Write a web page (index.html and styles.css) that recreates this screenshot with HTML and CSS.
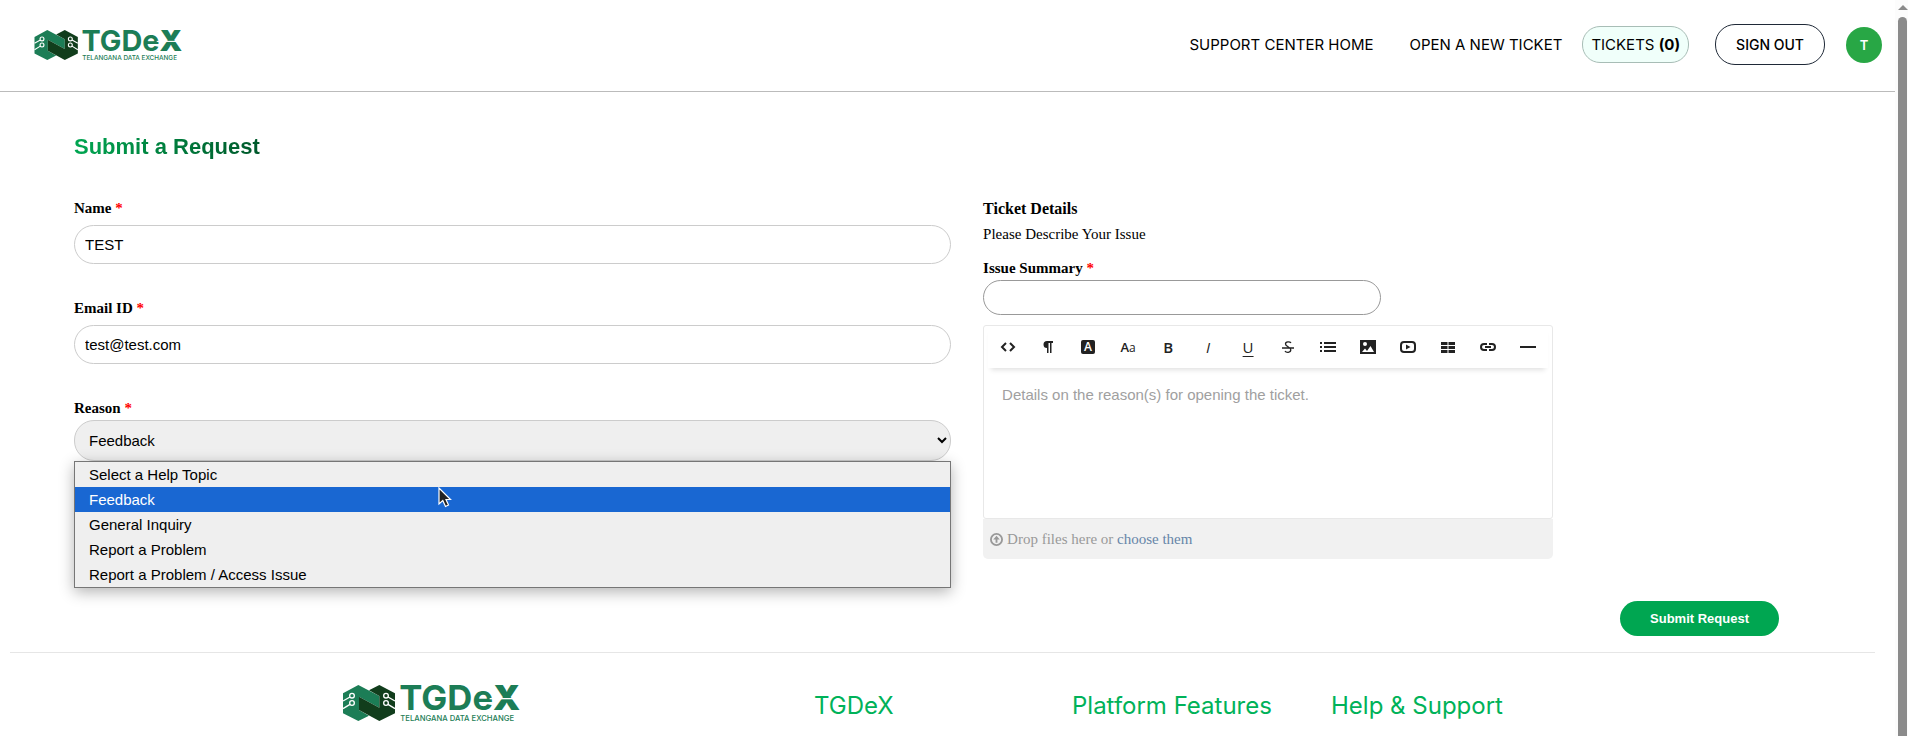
FILE: index.html
```html
<!DOCTYPE html>
<html lang="en">
<head>
    <meta charset="UTF-8">
    <meta name="viewport" content="width=device-width, initial-scale=1.0">
    <title>Submit a Request</title>
    <link rel="stylesheet" href="styles.css">
</head>
<body>
    <!-- Shared logo, used in the header and the footer -->
    <svg class="sprite" aria-hidden="true">
        <symbol id="logo" viewBox="0 0 522 108" overflow="visible">
            <polygon fill="#1c7d56" points="0,25 46,0 109,33 109,68 48,35 48,75 78,92 46,108 0,85"/>
            <polygon fill="#113d1c" points="78,16 109,0 156,25 156,85 109,108 48,75 48,35 109,68 109,33"/>
            <g fill="none" stroke="#fff" stroke-width="4">
                <circle cx="27" cy="32" r="7"/>
                <circle cx="27" cy="54" r="7"/>
                <path d="M21 36L0 48M21 58L0 71"/>
                <circle cx="129" cy="32" r="7"/>
                <circle cx="129" cy="54" r="7"/>
                <path d="M135 36L156 48M135 58L156 71"/>
            </g>
            <text class="logo-name" x="169" y="76">TGDe<tspan class="logo-x">X</tspan></text>
            <path d="M440 41H522" stroke="#fff" stroke-width="4"/>
            <text class="logo-tagline" x="172" y="107">TELANGANA DATA EXCHANGE</text>
        </symbol>
    </svg>

    <header class="header">
        <a href="#" aria-label="TGDeX"><svg class="logo"><use href="#logo"/></svg></a>
        <nav class="nav">
            <a class="nav-link" href="#">SUPPORT CENTER HOME</a>
            <a class="nav-link" href="#">OPEN A NEW TICKET</a>
            <a class="tickets" href="#">TICKETS <b>(0)</b></a>
            <a class="sign-out" href="#">SIGN OUT</a>
            <span class="avatar">T</span>
        </nav>
    </header>

    <main class="main">
        <h1 class="title">Submit a Request</h1>
        <form>
            <div class="columns">
                <div class="column">
                    <div class="field">
                        <label for="name">Name <span class="required">*</span></label>
                        <input class="text-input" type="text" id="name" value="TEST">
                    </div>
                    <div class="field">
                        <label for="email">Email ID <span class="required">*</span></label>
                        <input class="text-input" type="email" id="email" value="test@test.com">
                    </div>
                    <div class="field field-select">
                        <label for="reason">Reason <span class="required">*</span></label>
                        <select class="select" id="reason">
                            <option>Select a Help Topic</option>
                            <option selected>Feedback</option>
                            <option>General Inquiry</option>
                            <option>Report a Problem</option>
                            <option>Report a Problem / Access Issue</option>
                        </select>
                        <ul class="options">
                            <li>Select a Help Topic</li>
                            <li class="active">Feedback</li>
                            <li>General Inquiry</li>
                            <li>Report a Problem</li>
                            <li>Report a Problem / Access Issue</li>
                        </ul>
                        <svg class="cursor" viewBox="0 0 14 22" aria-hidden="true">
                            <path d="M1 1V17L4.800 13.500L7.500 19.500L10.500 18L8 12.500H12.500Z" fill="#222" stroke="#fff" stroke-width="1.200"/>
                        </svg>
                    </div>
                </div>

                <div class="column">
                    <h2 class="section-title">Ticket Details</h2>
                    <p class="section-text">Please Describe Your Issue</p>
                    <label class="summary-label" for="summary">Issue Summary <span class="required">*</span></label>
                    <input class="summary-input" type="text" id="summary">

                    <div class="editor">
                        <div class="toolbar">
                            <button type="button" aria-label="HTML"><svg viewBox="0 0 16 16"><path d="M6 4L2 8L6 12M10 4L14 8L10 12" fill="none" stroke="currentColor" stroke-width="2"/></svg></button>
                            <button type="button" aria-label="Format"><svg viewBox="0 0 16 16"><path d="M13 2V4H11.500V14H10V4H8.500V14H7V9A3.500 3.500 0 0 1 7 2Z" fill="currentColor"/></svg></button>
                            <button type="button" aria-label="Text color"><span class="glyph-box">A</span></button>
                            <button type="button" aria-label="Font family"><span class="glyph-font">A<small>a</small></span></button>
                            <button type="button" aria-label="Bold"><b>B</b></button>
                            <button type="button" aria-label="Italic"><i>I</i></button>
                            <button type="button" aria-label="Underline"><u>U</u></button>
                            <button type="button" aria-label="Strikethrough"><svg viewBox="0 0 16 16"><path d="M11 4C10 2.500 5.500 2.300 5.500 5C5.500 8 10.800 7.500 10.800 10.800C10.800 14 6 13.800 5 12M2 9H14" fill="none" stroke="currentColor" stroke-width="1.300"/></svg></button>
                            <button type="button" aria-label="List"><svg viewBox="0 0 16 16"><path d="M0 4H2M0 8H2M0 12H2M4 4H16M4 8H16M4 12H16" stroke="currentColor" stroke-width="2"/></svg></button>
                            <button type="button" aria-label="Image"><svg viewBox="0 0 16 16"><path d="M0 1H16V15H0Z" fill="currentColor"/><circle cx="5" cy="5" r="2" fill="#fff"/><path d="M2 13L5 9.500L7 12L10.500 7L14 13Z" fill="#fff"/></svg></button>
                            <button type="button" aria-label="Video"><svg viewBox="0 0 16 16"><rect x="1" y="3" width="14" height="10" rx="3" fill="none" stroke="currentColor" stroke-width="2"/><path d="M6 5.500L10.500 8L6 10.500Z" fill="currentColor"/></svg></button>
                            <button type="button" aria-label="Table"><svg viewBox="0 0 16 16"><path d="M1 3H7.500V6H1ZM8.500 3H15V6H8.500ZM1 7H7.500V10H1ZM8.500 7H15V10H8.500ZM1 11H7.500V14H1ZM8.500 11H15V14H8.500Z" fill="currentColor"/></svg></button>
                            <button type="button" aria-label="Link"><svg viewBox="0 0 16 16"><path d="M7 11H4A3 3 0 0 1 4 5H7M9 5H12A3 3 0 0 1 12 11H9M5 8H11" fill="none" stroke="currentColor" stroke-width="2"/></svg></button>
                            <button type="button" aria-label="Line"><svg viewBox="0 0 16 16"><path d="M0 8H16" stroke="currentColor" stroke-width="2"/></svg></button>
                        </div>
                        <textarea class="details" aria-label="Details" placeholder="Details on the reason(s) for opening the ticket."></textarea>
                    </div>
                    <div class="dropzone">
                        <svg viewBox="0 0 14 14" aria-hidden="true"><circle cx="7" cy="7" r="6" fill="none" stroke="currentColor" stroke-width="2"/><path d="M7 3L10.500 7H8V10.500H6V7H3.500Z" fill="currentColor"/></svg>
                        <span>Drop files here or <a href="#">choose them</a></span>
                    </div>
                </div>
            </div>
            <div class="actions">
                <button class="submit" type="submit">Submit Request</button>
            </div>
        </form>
    </main>

    <footer class="footer">
        <svg class="footer-logo" role="img" aria-label="TGDeX"><use href="#logo"/></svg>
        <h3>TGDeX</h3>
        <h3>Platform Features</h3>
        <h3>Help &amp; Support</h3>
    </footer>

    <div class="scrollbar" aria-hidden="true">
        <div class="scroll-arrow"></div>
        <div class="scroll-thumb"></div>
    </div>
</body>
</html>
```
FILE: styles.css
```css
* {
    box-sizing: border-box;
}
body {
    margin: 0;
    padding-right: 13px;
    min-height: 100vh;
    background-color: #fff;
    color: #000;
    font-family: "Liberation Serif", serif;
    font-size: 15px;
    line-height: 17px;
}
a {
    color: inherit;
    text-decoration: none;
}
.sprite {
    position: absolute;
    width: 0;
    height: 0;
}

/* Header */
.header {
    display: flex;
    justify-content: space-between;
    align-items: center;
    height: 92px;
    padding: 0 13px 2px 34px;
    border-bottom: 1px solid #bbb;
    font-family: Inter, sans-serif;
}
.logo {
    display: block;
    width: 146px;
    height: 30px;
    overflow: visible;
}
.logo-name {
    font: 700 104px Inter, sans-serif;
    fill: #1c7d56;
}
.logo-x {
    font-weight: 900;
}
.logo-tagline {
    font: 500 23px Inter, sans-serif;
    fill: #1c7d56;
}
.nav {
    display: flex;
    align-items: center;
}
.nav-link {
    margin-right: 36px;
}
.nav-link + .nav-link {
    margin-right: 20px;
}
.tickets {
    padding: 9px 8px;
    border: 1px solid #a8bdb6;
    border-radius: 18px;
    background-color: #f0fffa;
}
.sign-out {
    margin: 0 21px 0 26px;
    padding: 11px 20px;
    border: 1px solid #1f2937;
    border-radius: 20px;
    font-size: 14px;
    font-weight: 500;
}
.avatar {
    width: 36px;
    border-radius: 50%;
    background-color: #28a745;
    color: #fff;
    font-size: 13px;
    font-weight: 600;
    line-height: 36px;
    text-align: center;
}

/* Form */
.main {
    padding: 42px 116px 16px 74px;
}
.title {
    width: fit-content;
    margin: 0 0 40px;
    background: linear-gradient(90deg, #00a651, #00582b);
    background-clip: text;
    -webkit-background-clip: text;
    color: transparent;
    font: bold 22px/26px "Liberation Sans", sans-serif;
}
.columns {
    display: grid;
    grid-template-columns: 1.102fr 1fr;
    gap: 32px;
}
label {
    display: block;
    font-weight: bold;
}
.required {
    color: red;
}
.field {
    margin-bottom: 36px;
}
.field label {
    margin-bottom: 8px;
}
.text-input, .select, .summary-input {
    display: block;
    width: 100%;
    height: 39px;
    padding: 0 10px;
    border: 1px solid #ccc;
    border-radius: 20px;
    background-color: #fff;
    color: #000;
    font: 15px "Liberation Sans", sans-serif;
}
.field-select {
    position: relative;
    margin-bottom: 0;
}
.field-select label {
    margin-bottom: 3px;
}
.select {
    height: 41px;
    background-color: #efefef;
}
.options {
    position: absolute;
    top: 100%;
    left: 0;
    right: 0;
    margin: 0;
    padding: 0;
    border: 1px solid #767676;
    background-color: #efefef;
    box-shadow: 0 4px 14px rgba(0, 0, 0, 0.3);
    font: 15px/25px "Liberation Sans", sans-serif;
    list-style: none;
}
.options li {
    padding: 0 14px;
}
.options .active {
    background-color: #1967d2;
    color: #fff;
}
.cursor {
    position: absolute;
    top: 87px;
    left: 364px;
    width: 14px;
    height: 22px;
}
.section-title {
    margin: 0 0 8px;
    font-size: 16px;
    line-height: 18px;
}
.section-text {
    margin: 0 0 17px;
}
.summary-label {
    margin-bottom: 3px;
}
.summary-input {
    width: 50%;
    height: 35px;
    margin-bottom: 10px;
    border-color: #999;
}

/* Editor */
.editor, .dropzone {
    max-width: 570px;
}
.editor {
    border: 1px solid #e8e8e8;
    border-radius: 3px;
}
.toolbar {
    display: flex;
    margin: 0 4px;
    box-shadow: 0 5px 5px -3px rgba(0, 0, 0, 0.12);
}
.toolbar button {
    display: flex;
    flex: 1;
    align-items: center;
    justify-content: center;
    height: 42px;
    padding: 0;
    border: none;
    background-color: #fff;
    color: #222;
    font: 15px/16px "Open Sans", sans-serif;
}
.toolbar svg {
    width: 16px;
    height: 16px;
}
.toolbar b {
    font-weight: 600;
}
.toolbar u {
    text-underline-offset: 3px;
}
.glyph-box {
    width: 14px;
    border-radius: 2px;
    background-color: #222;
    color: #fff;
    font-size: 12px;
    font-weight: 600;
    line-height: 14px;
}
.glyph-font {
    font-size: 13px;
    font-weight: 600;
}
.glyph-font small {
    font-size: 12px;
    font-weight: 400;
}
.details {
    display: block;
    width: 100%;
    height: 150px;
    padding: 18px;
    border: none;
    background-color: transparent;
    font: 15px/17px "Liberation Sans", sans-serif;
    resize: none;
}
.details::placeholder {
    color: #a0a0a0;
}
.dropzone {
    display: flex;
    align-items: center;
    gap: 4px;
    height: 40px;
    padding: 0 7px;
    border-radius: 0 0 5px 5px;
    background-color: #f1f1f1;
    color: #999;
}
.dropzone svg {
    width: 13px;
    height: 13px;
}
.dropzone a {
    color: #6685a8;
}
.actions {
    display: flex;
    justify-content: flex-end;
    margin-top: 42px;
}
.submit {
    height: 35px;
    padding: 0 30px;
    border: none;
    border-radius: 18px;
    background-color: #00a651;
    color: #fff;
    font: bold 13px "Liberation Sans", sans-serif;
    cursor: pointer;
}

/* Footer */
.footer {
    display: grid;
    grid-template-columns: 471px 258px 259px 1fr;
    margin: 0 20px 0 10px;
    padding: 32px 0 8px 333px;
    border-top: 1px solid #e6e6e6;
}
.footer-logo {
    width: 174px;
    height: 36px;
    overflow: visible;
}
.footer h3 {
    margin: 0;
    color: #00b259;
    font: 400 24px/42px Inter, sans-serif;
}

/* Scrollbar */
.scrollbar {
    position: fixed;
    top: 0;
    right: 0;
    bottom: 0;
    display: flex;
    flex-direction: column;
    align-items: center;
    width: 13px;
    padding: 5px 1px 0 3px;
    background-color: #fcfcfc;
}
.scroll-arrow {
    border: 5px solid transparent;
    border-top: none;
    border-bottom-color: #8b8b8b;
}
.scroll-thumb {
    flex: 1;
    width: 9px;
    margin-top: 7px;
    border-radius: 5px 5px 0 0;
    background-color: #8b8b8b;
}
```
